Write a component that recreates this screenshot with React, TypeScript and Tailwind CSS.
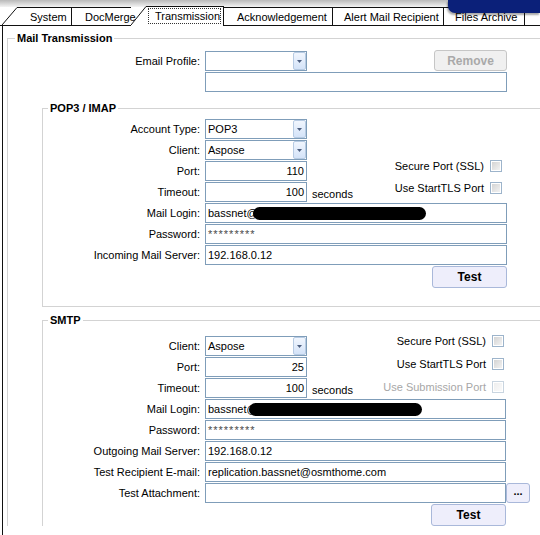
import React from 'react';

function Slant({ active }: { active?: boolean }) {
  if (active) {
    return (
      <svg width="15" height="20" className="relative z-10 -mb-px shrink-0">
        <polygon points="0,20 0,19 15,0.5 15,20" fill="#fff" />
        <line x1="0" y1="19" x2="15" y2="0.5" stroke="#111" strokeWidth="1" />
      </svg>
    );
  }
  return (
    <svg width="15" height="18" className="shrink-0">
      <polygon points="0,18 15,0.5 15,18" fill="#fff" />
      <line x1="0" y1="18" x2="15" y2="0.5" stroke="#111" strokeWidth="1" />
    </svg>
  );
}

function Combo({ value }: { value?: string }) {
  return (
    <div className="flex h-[20px] w-[102px] shrink-0 border border-[#7f9db9] bg-white">
      <div className="flex-1 pl-[2px] leading-[18px]">{value}</div>
      <div className="flex w-[13px] items-center justify-center rounded-[2px] border border-[#b7cbe3] bg-gradient-to-b from-[#f1f6fe] to-[#d4e3f8]">
        <svg width="5" height="3">
          <path d="M0 0h5L2.5 3z" fill="#4d5f80" />
        </svg>
      </div>
    </div>
  );
}

function Box({ className = '', children }: { className?: string; children?: React.ReactNode }) {
  return (
    <div
      className={`flex h-[20px] shrink-0 items-center overflow-hidden whitespace-nowrap border border-[#7f9db9] bg-white px-[2px] ${className}`}
    >
      {children}
    </div>
  );
}

function Check({ label, disabled, className = '' }: { label: string; disabled?: boolean; className?: string }) {
  return (
    <div className={`flex h-[12px] items-center gap-[6px] self-start ${className}`}>
      <span className={disabled ? 'text-[#a7a7a7]' : ''}>{label}</span>
      <span
        className={`block h-[12px] w-[12px] border p-px bg-white ${disabled ? 'border-[#c9d5e0]' : 'border-[#9db4cb]'}`}
      >
        <span
          className={`block h-full w-full bg-gradient-to-br ${disabled ? 'from-[#eeeeee] to-[#fafafa]' : 'from-[#d4d4d4] to-[#f2f2f2]'}`}
        />
      </span>
    </div>
  );
}

function Row({ label, lw = 'w-[162px]', children }: { label: string; lw?: string; children?: React.ReactNode }) {
  return (
    <div className="flex h-[20px] items-center">
      <div className={`${lw} shrink-0 whitespace-nowrap pr-[5px] text-right`}>{label}</div>
      {children}
    </div>
  );
}

function TestButton() {
  return (
    <button className="h-[22px] w-[75px] rounded-[3px] border border-[#a9b8da] bg-[#eeeefb] text-[12px] font-bold">
      Test
    </button>
  );
}

function Stars() {
  return <span className="tracking-[1px] text-[#4a4a4a]">*********</span>;
}

const tabs = [
  { label: 'Acknowledgement', w: 'w-[109px]', pl: 'pl-[13px]' },
  { label: 'Alert Mail Recipient', w: 'w-[111px]', pl: 'pl-[11px]' },
  { label: 'Files Archive', w: 'w-[81px]', pl: 'pl-[11px]' },
];

export default function App() {
  return (
    <div className="relative h-[535px] w-[540px] overflow-hidden bg-white font-['Liberation_Sans',Arial,sans-serif] text-[11px] text-black">
      {/* tab strip */}
      <div className="h-[7px] bg-gradient-to-b from-[#b9b9b9] to-[#f4f4f4]" />
      <div className="flex h-[19px] items-end border-b border-[#111] leading-[18px]">
        <div className="w-[2px] shrink-0" />
        <Slant />
        <div className="h-[18px] w-[55px] shrink-0 border-t border-r border-[#111] pl-[13px]">System</div>
        <div className="h-[18px] w-[59px] shrink-0 whitespace-nowrap border-t border-[#111] pl-[13px]">DocMerge</div>
        <Slant active />
        <div className="relative z-10 -mb-px h-[20px] w-[78px] shrink-0 border-t border-r border-[#111] bg-white pt-[1px]">
          <div className="mx-[2px] h-[16px] border border-dotted border-[#333] pl-[6px] leading-[14px]">Transmission</div>
        </div>
        {tabs.map((t) => (
          <div
            key={t.label}
            className={`h-[18px] ${t.w} ${t.pl} shrink-0 whitespace-nowrap border-t border-r border-[#111]`}
          >
            {t.label}
          </div>
        ))}
      </div>
      <div className="absolute right-0 top-0 h-[13px] w-[92px] rounded-bl-[7px] bg-[#0b2079] shadow-[-1px_2px_2px_rgba(0,0,0,0.35)]" />

      {/* panel */}
      <div className="ml-[2px] h-[509px] border-l border-[#111] pl-[4px] pt-[6px]">
        <fieldset className="w-[600px] border-0 border-t border-l border-[#d3d3d3]">
          <legend className="ml-[7px] h-[13px] px-[2px] font-bold leading-[13px]">Mail Transmission</legend>

          <div className="mt-[6px] flex flex-col gap-[1px]">
            <div className="flex h-[20px] items-start">
              <div className="flex h-[20px] w-[197px] shrink-0 items-center justify-end pr-[5px]">Email Profile:</div>
              <Combo />
              <button className="-mt-px ml-[127px] h-[21px] w-[73px] rounded-[3px] border border-[#c6c6c6] bg-[#f0f0f0] text-[12px] font-bold text-[#a9a9a9]">
                Remove
              </button>
            </div>
            <div className="flex h-[20px]">
              <div className="w-[197px] shrink-0" />
              <Box className="w-[302px]" />
            </div>
          </div>

          {/* POP3 / IMAP */}
          <fieldset className="ml-[34px] mt-[10px] w-[560px] border-0 border-t border-l border-b border-[#d3d3d3] pb-[18px]">
            <legend className="ml-[5px] h-[13px] px-[2px] font-bold leading-[13px]">POP3 / IMAP</legend>
            <div className="mt-[4px] flex w-[464px] flex-col gap-[1px]">
              <Row label="Account Type:">
                <Combo value="POP3" />
              </Row>
              <Row label="Client:">
                <Combo value="Aspose" />
              </Row>
              <Row label="Port:">
                <Box className="w-[102px] justify-end">110</Box>
                <div className="flex-1" />
                <Check label="Secure Port (SSL)" className="-mt-px mr-[5px]" />
              </Row>
              <Row label="Timeout:">
                <Box className="w-[102px] justify-end">100</Box>
                <span className="ml-[5px] pt-[4px]">seconds</span>
                <div className="flex-1" />
                <Check label="Use StartTLS Port" className="mr-[5px]" />
              </Row>
              <Row label="Mail Login:">
                <Box className="w-[302px]">
                  bassnet@
                  <span className="-ml-[5px] inline-block h-[13px] w-[173px] rounded-full bg-black" />
                </Box>
              </Row>
              <Row label="Password:">
                <Box className="w-[302px]">
                  <Stars />
                </Box>
              </Row>
              <Row label="Incoming Mail Server:">
                <Box className="w-[302px]">192.168.0.12</Box>
              </Row>
            </div>
            <div className="mt-[1px] flex w-[464px] justify-end">
              <TestButton />
            </div>
          </fieldset>

          {/* SMTP */}
          <fieldset className="ml-[34px] mt-[7px] w-[560px] border-0 border-t border-l border-[#d3d3d3]">
            <legend className="ml-[5px] h-[13px] px-[2px] font-bold leading-[13px]">SMTP</legend>
            <div className="mt-[9px] flex w-[463px] flex-col gap-[1px]">
              <Row label="Client:">
                <Combo value="Aspose" />
                <div className="flex-1" />
                <Check label="Secure Port (SSL)" className="-mt-px mr-[2px]" />
              </Row>
              <Row label="Port:">
                <Box className="w-[102px] justify-end">25</Box>
                <div className="flex-1" />
                <Check label="Use StartTLS Port" className="mt-px mr-[2px]" />
              </Row>
              <Row label="Timeout:">
                <Box className="w-[102px] justify-end">100</Box>
                <span className="ml-[5px] pt-[4px]">seconds</span>
                <div className="flex-1" />
                <Check label="Use Submission Port" disabled className="mt-[3px] mr-[2px]" />
              </Row>
              <Row label="Mail Login:">
                <Box className="w-[301px]">
                  bassnet@
                  <span className="-ml-[9px] inline-block h-[13px] w-[173px] rounded-full bg-black" />
                </Box>
              </Row>
              <Row label="Password:">
                <Box className="w-[301px]">
                  <Stars />
                </Box>
              </Row>
              <Row label="Outgoing Mail Server:">
                <Box className="w-[301px]">192.168.0.12</Box>
              </Row>
              <Row label="Test Recipient E-mail:">
                <Box className="w-[301px]">replication.bassnet@osmthome.com</Box>
              </Row>
              <Row label="Test Attachment:">
                <Box className="w-[301px]" />
                <button className="h-[20px] w-[24px] shrink-0 rounded-[3px] border border-[#a9b8da] bg-[#eeeefb] pb-[4px] text-[11px] font-bold leading-[14px]">
                  ...
                </button>
              </Row>
            </div>
            <div className="mt-[1px] flex w-[463px] justify-end">
              <TestButton />
            </div>
          </fieldset>
        </fieldset>
      </div>
    </div>
  );
}
